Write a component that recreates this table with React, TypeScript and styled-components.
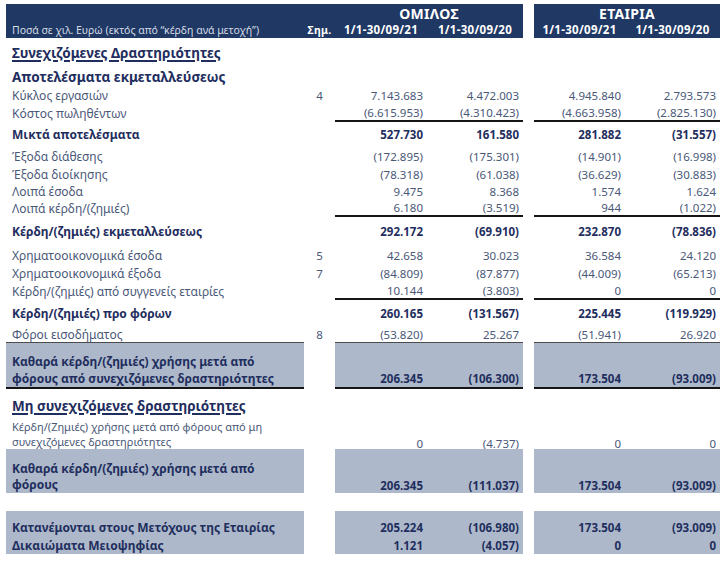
import React from 'react';
import styled, { createGlobalStyle, css } from 'styled-components';

const NAVY = '#1f3864';
const INK = '#1f2e5e';
const TEXT = '#4a5878';
const SHADE = '#adb9ca';

const GlobalStyle = createGlobalStyle`
  html, body { margin: 0; padding: 0; background: #ffffff; }
  body { font-family: "Noto Sans", "DejaVu Sans", sans-serif; }
  * { box-sizing: border-box; }
`;

const COLS = '298px 31px 92px 96px 11px 91px 95px';

const Sheet = styled.div`
  width: 714px;
  margin: 4px 0 0 6px;
  display: flex;
  flex-direction: column;
`;

const Grid = styled.div<{ $h: number }>`
  display: grid;
  grid-template-columns: ${COLS};
  height: ${(p) => p.$h}px;
`;

const HeadCell = styled.div<{ $span?: number; $light?: boolean; $left?: boolean; $size?: number }>`
  grid-column: span ${(p) => p.$span ?? 1};
  background: ${NAVY};
  color: ${(p) => (p.$light ? '#d5dbe6' : '#ffffff')};
  font-weight: ${(p) => (p.$light ? 400 : 700)};
  font-size: ${(p) => p.$size ?? 11.5}px;
  letter-spacing: ${(p) => (p.$light ? 0 : 0.3)}px;
  display: flex;
  align-items: center;
  justify-content: ${(p) => (p.$left ? 'flex-start' : 'center')};
  padding-left: ${(p) => (p.$left ? 6 : 0)}px;
  white-space: nowrap;
`;

const Blank = styled.div``;

type Kind = 'item' | 'total' | 'section' | 'sub';

const cellBase = css<{ $valign?: string; $pt?: number; $pb?: number; $shade?: boolean; $frame?: boolean; $lh?: number }>`
  display: flex;
  align-items: ${(p) => p.$valign ?? 'center'};
  padding-top: ${(p) => p.$pt ?? 0}px;
  padding-bottom: ${(p) => p.$pb ?? 0}px;
  line-height: ${(p) => (p.$lh ? `${p.$lh}px` : 'normal')};
  background: ${(p) => (p.$shade ? SHADE : 'transparent')};
  ${(p) =>
    p.$frame &&
    css`
      border-top: 1px solid #4b4b4b;
      border-bottom: 2px solid #151515;
    `}
`;

const Label = styled.div<{ $kind: Kind; $valign?: string; $pt?: number; $pb?: number; $shade?: boolean; $frame?: boolean; $lh?: number; $fs?: number }>`
  ${cellBase};
  padding-left: 6px;
  white-space: nowrap;
  ${(p) =>
    p.$kind === 'item'
      ? css`
          font-size: ${p.$fs ?? 12}px;
          color: ${TEXT};
          font-weight: 400;
        `
      : p.$kind === 'total'
      ? css`
          font-size: 12px;
          color: ${INK};
          font-weight: 700;
        `
      : p.$kind === 'section'
      ? css`
          font-size: 13.5px;
          color: ${INK};
          font-weight: 700;
          text-decoration: underline;
          text-decoration-thickness: 1.5px;
          text-underline-offset: 2px;
        `
      : css`
          font-size: 13.5px;
          color: ${INK};
          font-weight: 700;
        `}
`;

const Note = styled.div<{ $valign?: string; $pt?: number; $pb?: number; $lh?: number }>`
  ${cellBase};
  justify-content: center;
  font-size: 11.5px;
  color: ${TEXT};
`;

const Value = styled.div<{ $bold?: boolean; $rule?: boolean; $valign?: string; $pt?: number; $pb?: number; $shade?: boolean; $frame?: boolean; $lh?: number }>`
  ${cellBase};
  justify-content: flex-end;
  padding-right: 4px;
  font-size: 11.5px;
  white-space: nowrap;
  color: ${(p) => (p.$bold ? INK : TEXT)};
  font-weight: ${(p) => (p.$bold ? 700 : 400)};
  ${(p) =>
    p.$rule &&
    css`
      border-bottom: 2px solid #151515;
    `}
`;

type RowProps = {
  h: number;
  kind?: Kind;
  label?: React.ReactNode;
  note?: string;
  vals?: string[];
  rule?: boolean;
  shade?: boolean;
  frame?: boolean;
  valign?: string;
  pt?: number;
  pb?: number;
  vpb?: number;
  lh?: number;
  fs?: number;
};

const Row: React.FC<RowProps> = ({ h, kind = 'item', label, note, vals, rule, shade, frame, valign, pt, pb, vpb, lh, fs }) => {
  const bold = kind !== 'item' || shade;
  const v = vals ?? [];
  const single = lh && lh >= 15 && !shade && valign !== 'flex-end' ? lh : undefined;
  const val = (x: string | undefined, i: number) => (
    <Value
      key={i}
      $bold={bold}
      $rule={rule}
      $shade={shade}
      $frame={frame}
      $valign={valign}
      $pt={pt}
      $pb={vpb ?? pb}
      $lh={single}
    >
      {x}
    </Value>
  );
  return (
    <Grid $h={h}>
      <Label $kind={shade ? 'total' : kind} $shade={shade} $frame={frame} $valign={valign} $pt={pt} $pb={pb} $lh={lh} $fs={fs}>
        {label}
      </Label>
      <Note $valign={valign} $pt={pt} $pb={vpb ?? pb} $lh={single}>
        {note}
      </Note>
      {vals ? [val(v[0], 0), val(v[1], 1)] : [<Blank key="a" />, <Blank key="b" />]}
      <Blank />
      {vals ? [val(v[2], 2), val(v[3], 3)] : [<Blank key="c" />, <Blank key="d" />]}
    </Grid>
  );
};

const Spacer = styled.div<{ $h: number }>`
  height: ${(p) => p.$h}px;
`;

export default function App() {
  return (
    <>
      <GlobalStyle />
      <Sheet>
        <Grid $h={17}>
          <HeadCell $span={2} />
          <HeadCell $span={2} $size={14}>
            ΟΜΙΛΟΣ
          </HeadCell>
          <Blank />
          <HeadCell $span={2} $size={14}>
            ΕΤΑΙΡΙΑ
          </HeadCell>
        </Grid>
        <Grid $h={17}>
          <HeadCell $light $left $size={10.5}>
            Ποσά σε χιλ. Ευρώ (εκτός από “κέρδη ανά μετοχή”)
          </HeadCell>
          <HeadCell $size={10.5}>Σημ.</HeadCell>
          <HeadCell>1/1-30/09/21</HeadCell>
          <HeadCell>1/1-30/09/20</HeadCell>
          <Blank />
          <HeadCell>1/1-30/09/21</HeadCell>
          <HeadCell>1/1-30/09/20</HeadCell>
        </Grid>

        <Row h={30} kind="section" label="Συνεχιζόμενες Δραστηριότητες" />
        <Row h={18} kind="sub" label="Αποτελέσματα εκμεταλλεύσεως" />
        <Row h={18} label="Κύκλος εργασιών" note="4" vals={['7.143.683', '4.472.003', '4.945.840', '2.793.573']} />
        <Row h={18} label="Κόστος πωληθέντων" vals={['(6.615.953)', '(4.310.423)', '(4.663.958)', '(2.825.130)']} rule />
        <Row h={24} kind="total" label="Μικτά αποτελέσματα" vals={['527.730', '161.580', '281.882', '(31.557)']} />
        <Row h={20} label="Έξοδα διάθεσης" vals={['(172.895)', '(175.301)', '(14.901)', '(16.998)']} />
        <Row h={17} label="Έξοδα διοίκησης" vals={['(78.318)', '(61.038)', '(36.629)', '(30.883)']} />
        <Row h={17} label="Λοιπά έσοδα" vals={['9.475', '8.368', '1.574', '1.624']} />
        <Row h={17} label="Λοιπά κέρδη/(ζημιές)" vals={['6.180', '(3.519)', '944', '(1.022)']} rule />
        <Row h={29} kind="total" label="Κέρδη/(ζημιές) εκμεταλλεύσεως" vals={['292.172', '(69.910)', '232.870', '(78.836)']} />
        <Row h={19} label="Χρηματοοικονομικά έσοδα" note="5" vals={['42.658', '30.023', '36.584', '24.120']} />
        <Row h={17} label="Χρηματοοικονομικά έξοδα" note="7" vals={['(84.809)', '(87.877)', '(44.009)', '(65.213)']} />
        <Row h={18} label="Κέρδη/(ζημιές) από συγγενείς εταιρίες" vals={['10.144', '(3.803)', '0', '0']} rule />
        <Row h={27} kind="total" label="Κέρδη/(ζημιές) προ φόρων" vals={['260.165', '(131.567)', '225.445', '(119.929)']} />
        <Row h={15} lh={15} label="Φόροι εισοδήματος" note="8" vals={['(53.820)', '25.267', '(51.941)', '26.920']} />
        <Row
          h={47}
          shade
          frame
          valign="flex-end"
          lh={17}
          pb={0}
          vpb={1}
          label={
            <span>
              Καθαρά κέρδη/(ζημιές) χρήσης μετά από
              <br />
              φόρους από συνεχιζόμενες δραστηριότητες
            </span>
          }
          vals={['206.345', '(106.300)', '173.504', '(93.009)']}
        />
        <Row h={30} pt={4} kind="section" label="Μη συνεχιζόμενες δραστηριότητες" />
        <Row
          h={30}
          valign="flex-end"
          lh={15}
          fs={11}
          pb={2}
          vpb={0}
          label={
            <span>
              Κέρδη/(Ζημιές) χρήσης μετά από φόρους από μη
              <br />
              συνεχιζόμενες δραστηριότητες
            </span>
          }
          vals={['0', '(4.737)', '0', '0']}
        />
        <Row
          h={44}
          shade
          valign="flex-end"
          lh={16}
          label={
            <span>
              Καθαρά κέρδη/(ζημιές) χρήσης μετά από
              <br />
              φόρους
            </span>
          }
          vals={['206.345', '(111.037)', '173.504', '(93.009)']}
        />
        <Spacer $h={18} />
        <Row h={26} shade pt={6} label="Κατανέμονται στους Μετόχους της Εταιρίας" vals={['205.224', '(106.980)', '173.504', '(93.009)']} />
        <Row h={17} shade label="Δικαιώματα Μειοψηφίας" vals={['1.121', '(4.057)', '0', '0']} />
      </Sheet>
    </>
  );
}
